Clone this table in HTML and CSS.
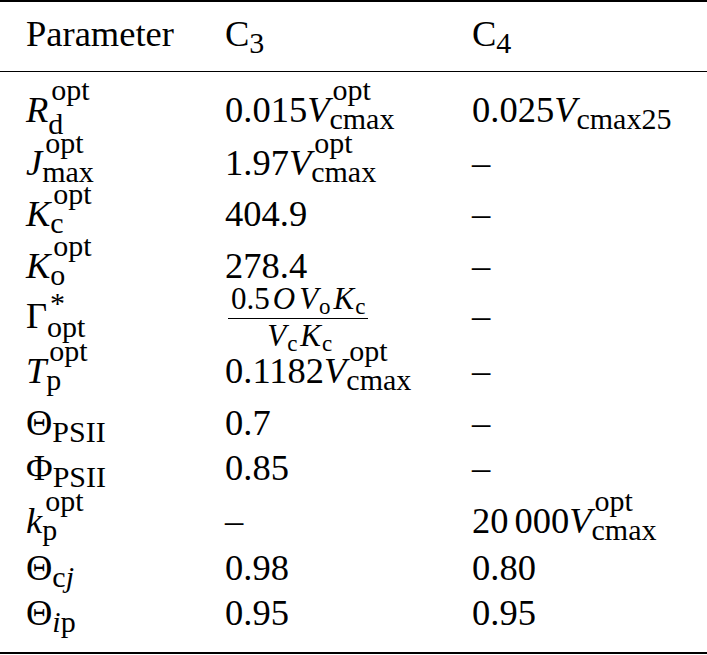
FILE: index.html
```html
<!DOCTYPE html>
<html>
<head>
<meta charset="utf-8">
<link rel="stylesheet" href="styles.css">
</head>
<body>
<div class="table">
  <div class="row head">
    <div class="cell">Parameter</div>
    <div class="cell">C<span class="sb">3</span></div>
    <div class="cell">C<span class="sb">4</span></div>
  </div>

  <div class="row h64">
    <div class="cell"><span class="mi">R</span><span class="ss deep"><span class="up">opt</span><span class="dn">d</span></span></div>
    <div class="cell">0.015<span class="mi">V</span><span class="ss"><span class="up">opt</span><span class="dn">cmax</span></span></div>
    <div class="cell">0.025<span class="mi">V</span><span class="sb">cmax25</span></div>
  </div>

  <div class="row h53">
    <div class="cell"><span class="mi">J</span><span class="ss"><span class="up">opt</span><span class="dn">max</span></span></div>
    <div class="cell">1.97<span class="mi">V</span><span class="ss"><span class="up">opt</span><span class="dn">cmax</span></span></div>
    <div class="cell">–</div>
  </div>

  <div class="row h51">
    <div class="cell"><span class="mi">K</span><span class="ss"><span class="up">opt</span><span class="dn">c</span></span></div>
    <div class="cell">404.9</div>
    <div class="cell">–</div>
  </div>

  <div class="row h52">
    <div class="cell"><span class="mi">K</span><span class="ss"><span class="up">opt</span><span class="dn">o</span></span></div>
    <div class="cell">278.4</div>
    <div class="cell">–</div>
  </div>

  <div class="row h50">
    <div class="cell">Γ<span class="ss gam"><span class="up">*</span><span class="dn">opt</span></span></div>
    <div class="cell"><span class="frac"><span class="num">0.5<span class="mi">O</span><span class="mi">V</span><span class="fs">o</span><span class="mi">K</span><span class="fs">c</span></span><span class="den"><span class="mi">V</span><span class="fs">c</span><span class="mi">K</span><span class="fs">c</span></span></span></div>
    <div class="cell">–</div>
  </div>

  <div class="row h55">
    <div class="cell"><span class="mi">T</span><span class="ss"><span class="up">opt</span><span class="dn">p</span></span></div>
    <div class="cell">0.1182<span class="mi">V</span><span class="ss"><span class="up">opt</span><span class="dn">cmax</span></span></div>
    <div class="cell">–</div>
  </div>

  <div class="row h52">
    <div class="cell">Θ<span class="sb">PSII</span></div>
    <div class="cell">0.7</div>
    <div class="cell">–</div>
  </div>

  <div class="row h45">
    <div class="cell">Φ<span class="sb">PSII</span></div>
    <div class="cell">0.85</div>
    <div class="cell">–</div>
  </div>

  <div class="row h53">
    <div class="cell"><span class="mi">k</span><span class="ss"><span class="up">opt</span><span class="dn">p</span></span></div>
    <div class="cell">–</div>
    <div class="cell">20<span class="thin"></span>000<span class="mi">V</span><span class="ss"><span class="up">opt</span><span class="dn">cmax</span></span></div>
  </div>

  <div class="row h47">
    <div class="cell">Θ<span class="sb">c<span class="mi">j</span></span></div>
    <div class="cell">0.98</div>
    <div class="cell">0.80</div>
  </div>

  <div class="row h45">
    <div class="cell">Θ<span class="sb"><span class="mi">i</span>p</span></div>
    <div class="cell">0.95</div>
    <div class="cell">0.95</div>
  </div>
</div>
</body>
</html>
```

FILE: styles.css
```css
html, body {
  margin: 0;
  padding: 0;
  background: #fff;
}

.table {
  width: 707px;
  box-sizing: border-box;
  font-family: "Liberation Serif", "Times New Roman", serif;
  font-size: 36.5px;
  color: #000;
  border-top: 2px solid #000;
  border-bottom: 2px solid #000;
  padding-bottom: 13px;
}

.row {
  display: grid;
  grid-template-columns: 199px 247px 1fr;
  align-items: end;
  box-sizing: border-box;
  padding-left: 26px;
  padding-bottom: 8px;
  line-height: 37px;
}

.cell {
  white-space: nowrap;
}

.head {
  height: 70px;
  padding-bottom: 19px;
  border-bottom: 1px solid #000;
}

.h64 { height: 64px; }
.h55 { height: 55px; }
.h53 { height: 53px; }
.h52 { height: 52px; }
.h51 { height: 51px; }
.h50 { height: 50px; }
.h47 { height: 47px; }
.h45 { height: 45px; }

.mi {
  font-style: italic;
}

/* single subscript */
.sb {
  font-size: 30px;
  line-height: 0;
  vertical-align: -7px;
}

/* stacked super/subscript: baseline gap = line-height, drop = vertical-align */
.ss {
  display: inline-block;
  font-size: 30px;
  line-height: 29px;
  vertical-align: -7px;
  margin: -29px 0;
}

.ss.deep {
  line-height: 34px;
  vertical-align: -12px;
  margin: -34px 0;
}

.ss.gam {
  line-height: 24px;
  vertical-align: -9px;
  margin: -24px 0;
}

.ss .up,
.ss .dn {
  display: block;
}

.ss .up {
  padding-left: 3px;
}

/* fraction */
.frac {
  display: inline-block;
  font-size: 31px;
  line-height: 34px;
  text-align: center;
  vertical-align: -18px;
  margin: -36px 0 -35px 3px;
}

.frac .num,
.frac .den {
  display: block;
  padding: 0 3px;
}

.frac .num {
  padding-bottom: 2px;
  border-bottom: 1px solid #000;
}

.frac .mi {
  padding: 0 1px 0 3px;
}

.fs {
  font-size: 23px;
  line-height: 0;
  vertical-align: -5px;
}

.thin {
  display: inline-block;
  width: 6px;
}
```
